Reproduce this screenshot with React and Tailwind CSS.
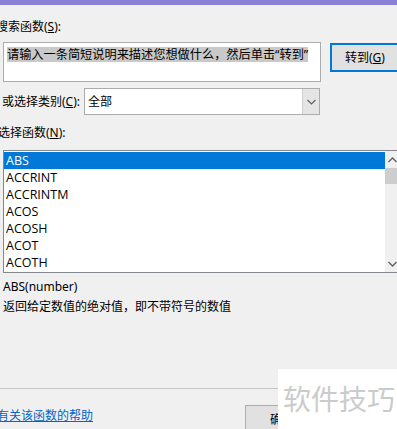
import React from "react";

const cjk = { fontFamily: '"Noto Sans", "Noto Sans CJK SC", sans-serif' };

export default function App() {
  const items = ["ABS", "ACCRINT", "ACCRINTM", "ACOS", "ACOSH", "ACOT", "ACOTH"];
  return (
    <div className="relative w-[397px] h-[429px] overflow-hidden bg-[#f0f0f0] text-[12px] text-black" style={cjk}>
      <div className="h-[5px] bg-[#8b80d8]" />
      <div className="mt-[14px] h-[16px] leading-[16px] -ml-[4px] whitespace-nowrap">
        搜索函数(<span className="underline">S</span>):
      </div>
      <div className="mt-[7px] flex items-start">
        <div className="ml-[3px] w-[318px] shrink-0 h-[40px] border border-[#acacac] bg-white pl-[3px] pt-[3px]">
          <span className="bg-[#c9c9c9] leading-[15px] inline-block whitespace-nowrap text-[12.2px]">请输入一条简短说明来描述您想做什么，然后单击“转到”</span>
        </div>
        <div className="ml-[9px] mt-[1px] w-[80px] h-[29px] shrink-0 border-2 border-[#0078d7] bg-[#e1e1e1] flex items-center pl-[13px] whitespace-nowrap">
          转到(<span className="underline">G</span>)
        </div>
      </div>
      <div className="mt-[6px] flex items-center h-[27px]">
        <div className="ml-[2px] w-[82px] shrink-0 whitespace-nowrap">
          或选择类别(<span className="underline">C</span>):
        </div>
        <div className="w-[236px] shrink-0 h-[27px] border border-[#acacac] bg-white flex">
          <div className="flex-1 pl-[3px] flex items-center">全部</div>
          <div className="w-[17px] h-full bg-[#e5e5e5] border-l border-[#cfcfcf] flex items-center justify-center">
            <svg width="9" height="6" viewBox="0 0 9 6"><path d="M0.5 1 L4.5 5 L8.5 1" fill="none" stroke="#606060" strokeWidth="1.2" /></svg>
          </div>
        </div>
      </div>
      <div className="mt-[10px] h-[16px] leading-[16px] -ml-[2px] whitespace-nowrap">
        选择函数(<span className="underline">N</span>):
      </div>
      <div className="mt-[9px] ml-[3px] w-[398px] h-[123px] border border-[#828790] bg-white flex">
        <div className="w-[381px] shrink-0 pt-[1px]">
          {items.map((it, i) => (
            <div
              key={it}
              className={
                "h-[17px] leading-[17px] pl-[2px] " +
                (i === 0 ? "bg-[#0078d7] text-white" : "")
              }
              style={{ fontFamily: '"Open Sans", "Noto Sans", sans-serif', fontSize: "12.5px" }}
            >
              {it}
            </div>
          ))}
        </div>
        <div className="w-[14px] shrink-0 h-full bg-[#f0f0f0] flex flex-col">
          <div className="h-[17px] flex items-center justify-center">
            <svg width="9" height="6" viewBox="0 0 9 6"><path d="M0.5 5 L4.5 1 L8.5 5" fill="none" stroke="#606060" strokeWidth="1.3" /></svg>
          </div>
          <div className="h-[16px] bg-[#cdcdcd]" />
          <div className="flex-1" />
          <div className="h-[17px] flex items-center justify-center">
            <svg width="9" height="6" viewBox="0 0 9 6"><path d="M0.5 1 L4.5 5 L8.5 1" fill="none" stroke="#606060" strokeWidth="1.3" /></svg>
          </div>
        </div>
      </div>
      <div className="mt-[5px] ml-[3px] h-[17px] leading-[17px]">ABS(number)</div>
      <div className="mt-[3px] ml-[3px] h-[17px] leading-[17px] whitespace-nowrap">返回给定数值的绝对值，即不带符号的数值</div>
      <div className="mt-[73px] w-[290px] h-px bg-[#c6c6c6]" />
      <div className="mt-[16px] flex items-start">
        <div className="-ml-[3px] mt-[2px] text-[#0066cc] underline whitespace-nowrap w-[248px] shrink-0">有关该函数的帮助</div>
        <div className="w-[60px] shrink-0 h-[30px] border border-[#adadad] bg-[#e1e1e1] pl-[24px] pt-[5px]">确定</div>
      </div>
      <div className="absolute left-[278px] top-[369px] w-[119px] h-[60px] bg-white flex items-start">
        <span className="mt-[12px] ml-[5px] text-[28px] leading-[34px] text-[#cbcbcb] whitespace-nowrap" style={{ fontFamily: '"Noto Sans CJK SC", sans-serif' }}>软件技巧</span>
      </div>
    </div>
  );
}
